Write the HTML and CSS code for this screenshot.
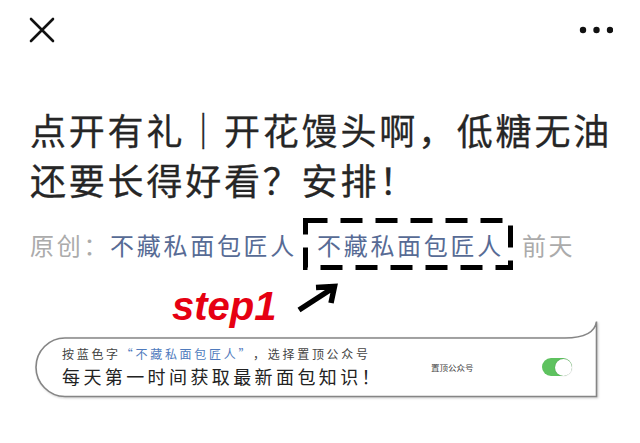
FILE: index.html
```html
<!DOCTYPE html>
<html lang="zh-CN">
<head>
<meta charset="utf-8">
<title>点开有礼</title>
<link rel="stylesheet" href="styles.css">
</head>
<body>
<div class="page">
  <header class="topbar">
    <svg class="icon-close" width="26" height="26" viewBox="0 0 26 26"><path d="M2 2L24 24M24 2L2 24" stroke="#111" stroke-width="2.6" stroke-linecap="round" fill="none"/></svg>
    <svg class="icon-more" width="34" height="8" viewBox="0 0 34 8"><circle cx="4" cy="4" r="3.2"/><circle cx="17.5" cy="4" r="3.2"/><circle cx="31" cy="4" r="3.2"/></svg>
  </header>

  <h1 class="title">点开有礼｜开花馒头啊，低糖无油还要长得好看？安排！</h1>

  <div class="meta">
    <span class="meta-label">原创：</span>
    <span class="author">不藏私面包匠人</span>
    <span class="author author-boxed">不藏私面包匠人<svg class="dash-box" width="210" height="52" viewBox="0 0 210 52"><rect x="2.5" y="2.5" width="205" height="47" fill="none" stroke="#000" stroke-width="5" stroke-dasharray="22 13"/></svg></span>
    <span class="meta-time">前天</span>
  </div>

  <div class="annotation">
    <span class="step">step1</span>
    <svg class="arrow" width="44" height="30" viewBox="0 0 44 30"><path d="M4 27L38 5M21 4.5L39.5 3.5L36 20" stroke="#000" stroke-width="5.5" fill="none" stroke-linejoin="miter"/></svg>
  </div>

  <div class="bubble">
    <svg class="bubble-shape" width="563" height="78" viewBox="0 0 563 78"><path d="M30 17L530 17C549 17 560 11 561.5 0.5L561.5 75.5L30 75.5C14 75.5 1 62 1 46.25C1 30 14 17 30 17Z" fill="#fff" stroke="#858585" stroke-width="1.6"/></svg>
    <div class="bubble-body">
      <div class="bubble-text">
        <p class="bubble-line1">按蓝色字<span class="bubble-link"><span class="q q-open">“</span>不藏私面包匠人<span class="q q-close">”</span></span>，选择置顶公众号</p>
        <p class="bubble-line2">每天第一时间获取最新面包知识！</p>
      </div>
      <span class="pin-label">置顶公众号</span>
      <span class="toggle"><span class="toggle-knob"></span></span>
    </div>
  </div>
</div>
</body>
</html>
```

FILE: styles.css
```css
html, body {
  margin: 0;
  padding: 0;
  background: #fff;
}

body {
  font-family: "Noto Sans CJK SC", "Noto Sans", sans-serif;
  color: #222;
}

.page {
  width: 640px;
  height: 443px;
  overflow: hidden;
}

.topbar {
  height: 60px;
  display: flex;
  align-items: center;
  justify-content: space-between;
  padding: 0 27px 0 29px;
  box-sizing: border-box;
}

.icon-more {
  fill: #111;
}

.title {
  margin: 44px 0 0;
  padding: 0 20px 0 30px;
  font-size: 36px;
  line-height: 50px;
  letter-spacing: 2.8px;
  font-weight: 400;
  -webkit-text-stroke: 0.3px #262626;
  color: #262626;
}

.meta {
  margin-top: 26px;
  height: 30px;
  display: flex;
  align-items: center;
  padding-left: 30px;
  font-size: 24px;
  line-height: 30px;
  letter-spacing: 2.7px;
  color: #ababab;
  white-space: nowrap;
}

.author {
  color: #576b95;
}

.author + .author {
  margin-left: 20px;
}

.author-boxed {
  position: relative;
}

.dash-box {
  position: absolute;
  left: -14px;
  top: -12px;
}

.meta-time {
  margin-left: 18px;
}

.annotation {
  margin-top: 31px;
  height: 30px;
  display: flex;
  align-items: flex-end;
  padding-left: 172px;
}

.step {
  font-family: "Liberation Sans", Arial, sans-serif;
  font-weight: bold;
  font-style: italic;
  font-size: 40px;
  line-height: 30px;
  color: #e60012;
  align-self: center;
}

.arrow {
  margin-left: 18px;
  margin-bottom: 8px;
}

.bubble {
  position: relative;
  margin-left: 35px;
  width: 563px;
  height: 78px;
  padding-top: 17px;
  box-sizing: border-box;
}

.bubble-shape {
  position: absolute;
  left: 0;
  top: 0;
  filter: drop-shadow(1px 1px 1px rgba(0, 0, 0, 0.2));
}

.bubble-body {
  position: relative;
  height: 58px;
  display: flex;
  align-items: center;
  padding-left: 27px;
}

.bubble-text {
  width: 345px;
  align-self: flex-start;
  padding-top: 7px;
}

.bubble-text p {
  margin: 0;
  white-space: nowrap;
}

.bubble-line1 {
  font-size: 12px;
  line-height: 18px;
  letter-spacing: 2.7px;
  color: #444;
}

.bubble-link {
  color: #4f7bbd;
}

.q {
  display: inline-block;
  width: 12px;
  letter-spacing: 0;
}

.q-open {
  margin-right: 2.7px;
  text-align: right;
}

.q-close {
  margin-right: 2.7px;
  text-align: left;
}

.bubble-line2 {
  margin-top: 5px;
  font-size: 18px;
  line-height: 26px;
  letter-spacing: 3.4px;
  color: #222;
}

.pin-label {
  margin-left: 24px;
  font-size: 8.5px;
  color: #444;
  white-space: nowrap;
}

.toggle {
  margin-left: 68px;
  width: 30px;
  height: 18px;
  border-radius: 9px;
  background: #5ec25f;
  display: flex;
  align-items: center;
  justify-content: flex-end;
}

.toggle-knob {
  width: 17px;
  height: 17px;
  border-radius: 50%;
  background: #fff;
  box-shadow: 0 0 1px rgba(0, 0, 0, 0.35);
}
```
